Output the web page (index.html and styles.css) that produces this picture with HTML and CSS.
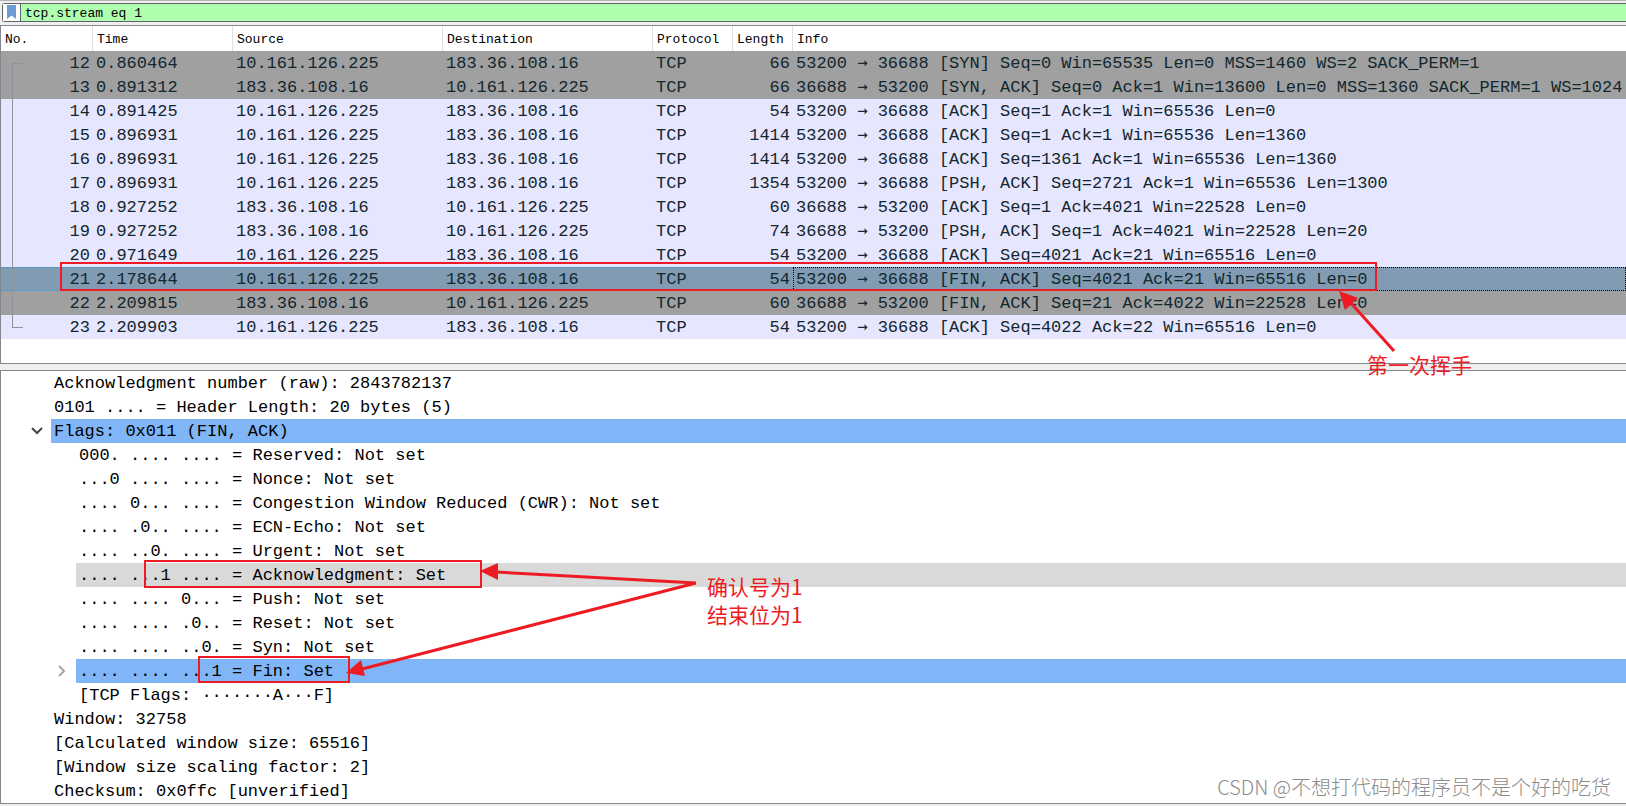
FILE: index.html
```
<!DOCTYPE html>
<html lang="en">
<head>
<meta charset="utf-8">
<title>tcp.stream eq 1</title>
<link rel="stylesheet" href="styles.css">
</head>
<body>
<main class="app">
  <form class="filter">
    <button class="bookmark" type="button" aria-label="Filter bookmarks">
      <svg width="9" height="14" viewBox="0 0 9 14" aria-hidden="true"><path d="M0 0H9V14L4.500 10.500L0 14Z" fill="#6d9bd3"/></svg>
    </button>
    <input class="filter-text" type="text" aria-label="Display filter" value="tcp.stream eq 1">
  </form>

  <section class="packets">
    <table class="packet-table">
      <colgroup><col class="c-no"><col class="c-time"><col class="c-addr"><col class="c-addr"><col class="c-proto"><col class="c-len"><col></colgroup>
      <thead><tr><th>No.</th><th>Time</th><th>Source</th><th>Destination</th><th>Protocol</th><th>Length</th><th>Info</th></tr></thead>
      <tbody>
        <tr class="gray"><td class="num">12</td><td>0.860464</td><td>10.161.126.225</td><td>183.36.108.16</td><td>TCP</td><td class="num">66</td><td>53200 <span class="to">→</span> 36688 [SYN] Seq=0 Win=65535 Len=0 MSS=1460 WS=2 SACK_PERM=1</td></tr>
        <tr class="gray"><td class="num">13</td><td>0.891312</td><td>183.36.108.16</td><td>10.161.126.225</td><td>TCP</td><td class="num">66</td><td>36688 <span class="to">→</span> 53200 [SYN, ACK] Seq=0 Ack=1 Win=13600 Len=0 MSS=1360 SACK_PERM=1 WS=1024</td></tr>
        <tr><td class="num">14</td><td>0.891425</td><td>10.161.126.225</td><td>183.36.108.16</td><td>TCP</td><td class="num">54</td><td>53200 <span class="to">→</span> 36688 [ACK] Seq=1 Ack=1 Win=65536 Len=0</td></tr>
        <tr><td class="num">15</td><td>0.896931</td><td>10.161.126.225</td><td>183.36.108.16</td><td>TCP</td><td class="num">1414</td><td>53200 <span class="to">→</span> 36688 [ACK] Seq=1 Ack=1 Win=65536 Len=1360</td></tr>
        <tr><td class="num">16</td><td>0.896931</td><td>10.161.126.225</td><td>183.36.108.16</td><td>TCP</td><td class="num">1414</td><td>53200 <span class="to">→</span> 36688 [ACK] Seq=1361 Ack=1 Win=65536 Len=1360</td></tr>
        <tr><td class="num">17</td><td>0.896931</td><td>10.161.126.225</td><td>183.36.108.16</td><td>TCP</td><td class="num">1354</td><td>53200 <span class="to">→</span> 36688 [PSH, ACK] Seq=2721 Ack=1 Win=65536 Len=1300</td></tr>
        <tr><td class="num">18</td><td>0.927252</td><td>183.36.108.16</td><td>10.161.126.225</td><td>TCP</td><td class="num">60</td><td>36688 <span class="to">→</span> 53200 [ACK] Seq=1 Ack=4021 Win=22528 Len=0</td></tr>
        <tr><td class="num">19</td><td>0.927252</td><td>183.36.108.16</td><td>10.161.126.225</td><td>TCP</td><td class="num">74</td><td>36688 <span class="to">→</span> 53200 [PSH, ACK] Seq=1 Ack=4021 Win=22528 Len=20</td></tr>
        <tr><td class="num">20</td><td>0.971649</td><td>10.161.126.225</td><td>183.36.108.16</td><td>TCP</td><td class="num">54</td><td>53200 <span class="to">→</span> 36688 [ACK] Seq=4021 Ack=21 Win=65516 Len=0</td></tr>
        <tr class="selected"><td class="num">21</td><td>2.178644</td><td>10.161.126.225</td><td>183.36.108.16</td><td>TCP</td><td class="num">54</td><td class="focused">53200 <span class="to">→</span> 36688 [FIN, ACK] Seq=4021 Ack=21 Win=65516 Len=0</td></tr>
        <tr class="gray"><td class="num">22</td><td>2.209815</td><td>183.36.108.16</td><td>10.161.126.225</td><td>TCP</td><td class="num">60</td><td>36688 <span class="to">→</span> 53200 [FIN, ACK] Seq=21 Ack=4022 Win=22528 Len=0</td></tr>
        <tr><td class="num">23</td><td>2.209903</td><td>10.161.126.225</td><td>183.36.108.16</td><td>TCP</td><td class="num">54</td><td>53200 <span class="to">→</span> 36688 [ACK] Seq=4022 Ack=22 Win=65516 Len=0</td></tr>
      </tbody>
    </table>
    <div class="bracket"></div>
  </section>

  <section class="details">
    <ul class="tree">
      <li><span class="label">Acknowledgment number (raw): 2843782137</span></li>
      <li><span class="label">0101 .... = Header Length: 20 bytes (5)</span></li>
      <li>
        <button class="toggle" type="button" aria-label="Collapse Flags"><svg width="12" height="8" viewBox="0 0 12 8" aria-hidden="true"><path d="M1 1L6 6L11 1" fill="none" stroke="#444" stroke-width="2"/></svg></button>
        <span class="label blue">Flags: 0x011 (FIN, ACK)</span>
      </li>
      <li class="deep"><span class="label">000. .... .... = Reserved: Not set</span></li>
      <li class="deep"><span class="label">...0 .... .... = Nonce: Not set</span></li>
      <li class="deep"><span class="label">.... 0... .... = Congestion Window Reduced (CWR): Not set</span></li>
      <li class="deep"><span class="label">.... .0.. .... = ECN-Echo: Not set</span></li>
      <li class="deep"><span class="label">.... ..0. .... = Urgent: Not set</span></li>
      <li class="deep"><span class="label hover">.... ...1 .... = Acknowledgment: Set</span></li>
      <li class="deep"><span class="label">.... .... 0... = Push: Not set</span></li>
      <li class="deep"><span class="label">.... .... .0.. = Reset: Not set</span></li>
      <li class="deep"><span class="label">.... .... ..0. = Syn: Not set</span></li>
      <li class="deep">
        <button class="toggle" type="button" aria-label="Expand Fin"><svg width="8" height="12" viewBox="0 0 8 12" aria-hidden="true"><path d="M1 1L6 6L1 11" fill="none" stroke="#a6a6a6" stroke-width="2"/></svg></button>
        <span class="label blue">.... .... ...1 = Fin: Set</span>
      </li>
      <li class="deep"><span class="label">[TCP Flags: ·······A···F]</span></li>
      <li><span class="label">Window: 32758</span></li>
      <li><span class="label">[Calculated window size: 65516]</span></li>
      <li><span class="label">[Window size scaling factor: 2]</span></li>
      <li><span class="label">Checksum: 0x0ffc [unverified]</span></li>
    </ul>
  </section>

  <svg class="marks" aria-hidden="true">
    <g fill="none" stroke="#ed1c24" stroke-width="2">
      <rect x="61" y="263" width="1315" height="27"/>
      <rect x="145" y="561" width="336" height="26"/>
      <rect x="199" y="657" width="150" height="25"/>
    </g>
    <g stroke="#ed1c24" stroke-width="3">
      <path d="M1394 351L1350 302M696 583L496 572M696 583L362 669"/>
    </g>
    <g fill="#ed1c24">
      <path d="M1339 291L1358 298L1345 310Z"/>
      <path d="M480 571L498 563V580Z"/>
      <path d="M346 673L361 660L365 676Z"/>
    </g>
  </svg>
  <p class="note note-wave">第一次挥手</p>
  <p class="note note-bits">确认号为1<br>结束位为1</p>
  <p class="watermark">CSDN @不想打代码的程序员不是个好的吃货</p>
</main>
</body>
</html>
```

FILE: styles.css
```
* {
  box-sizing: border-box;
}

body {
  margin: 0;
  background: #f0f0f0;
  color: #000;
  font-family: "Liberation Mono", "Noto Sans CJK SC", monospace;
  font-size: 17px;
  line-height: 22px;
}

.app {
  position: relative;
  display: flex;
  flex-direction: column;
  min-height: 100vh;
  overflow: hidden;
  border-top: 1px solid #b4b4b4;
}

.filter {
  display: flex;
  height: 19px;
  margin: 2px 0 3px 2px;
  border: 1px solid #5f6468;
  border-right: 0;
  border-radius: 3px 0 0 3px;
  background: #fff;
}

.bookmark {
  display: flex;
  justify-content: center;
  width: 18px;
  padding: 1px 0 0;
  border: 0;
  border-right: 1px solid #5f6468;
  background: #fff;
}

.filter-text {
  flex: 1;
  min-width: 0;
  padding: 2px 4px 0;
  border: 0;
  outline: 0;
  background: #afffaf;
  color: #000;
  font-family: "Liberation Mono", monospace;
  font-size: 13px;
}

.packets {
  position: relative;
  padding-bottom: 24px;
  border: 1px solid #828790;
  border-right: 0;
  background: #fff;
}

.packet-table {
  width: 100%;
  table-layout: fixed;
  border-collapse: separate;
  border-spacing: 0;
  color: #12272e;
}

.c-no { width: 92px; }
.c-time { width: 140px; }
.c-addr { width: 210px; }
.c-proto { width: 80px; }
.c-len { width: 60px; }

.packet-table th {
  height: 25px;
  padding: 2px 4px 0;
  border-right: 1px solid #e0e0e0;
  color: #000;
  font-size: 13px;
  font-weight: normal;
  text-align: left;
}

.packet-table th:last-child {
  border-right: 0;
}

.packet-table td {
  height: 24px;
  padding: 2px 3px 0;
  white-space: nowrap;
}

.packet-table .num {
  text-align: right;
}

.packet-table tbody tr {
  background: #e7e6ff;
}

.packet-table .gray {
  background: #a0a0a0;
}

.packet-table .selected {
  background: #809bb2;
}

.selected td {
  box-shadow: inset 0 1px #5c98c8, inset 0 -1px #5c98c8;
}

.packet-table .focused {
  box-shadow: none;
  outline: 1px dotted #000;
  outline-offset: -1px;
}

.to {
  font-family: "DejaVu Sans Mono", monospace;
  line-height: 1;
}

/* conversation range marker in the No. column */
.bracket {
  position: absolute;
  top: 37px;
  bottom: 35px;
  left: 11px;
  width: 11px;
  border: 1px solid #8b959a;
  border-right: 0;
}

.details {
  margin-top: 6px;
  border: 1px solid #828790;
  border-right: 0;
  background: #fff;
}

.tree {
  margin: 0;
  padding: 0;
  list-style: none;
}

.tree li {
  display: flex;
  padding-left: 25px;
}

.tree .deep {
  padding-left: 50px;
}

.toggle {
  display: flex;
  flex: none;
  align-items: center;
  justify-content: center;
  width: 25px;
  height: 24px;
  padding: 0 3px 0 0;
  border: 0;
  background: none;
}

.label {
  flex: 1;
  padding: 2px 0 0 3px;
  white-space: nowrap;
}

.label:first-child {
  margin-left: 25px;
}

.blue {
  background: #80b5f7;
}

.hover {
  background: #d9d9d9;
}

.marks {
  position: absolute;
  top: -1px;
  left: 0;
  width: 100%;
  height: 100%;
  pointer-events: none;
}

.note,
.watermark {
  position: absolute;
  margin: 0;
  font-family: "Noto Sans CJK SC", sans-serif;
  line-height: 28px;
  white-space: nowrap;
}

.note {
  color: #ed1c24;
  font-size: 21px;
}

.note-wave {
  top: 349px;
  left: 1367px;
}

.note-bits {
  top: 571px;
  left: 707px;
}

.watermark {
  right: 15px;
  bottom: 5px;
  color: #8c8c8c;
  font-size: 20px;
  font-weight: 300;
}
```
